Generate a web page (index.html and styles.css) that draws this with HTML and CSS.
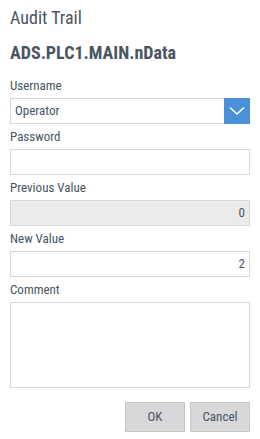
FILE: index.html
```html
<!DOCTYPE html>
<html>
<head>
<meta charset="utf-8">
<link rel="stylesheet" href="styles.css">
</head>
<body>
<div class="dialog">
  <div class="title">Audit Trail</div>
  <div class="symbol">ADS.PLC1.MAIN.nData</div>
  <div class="field">
    <div class="label">Username</div>
    <div class="combo">
      <div class="combo-text">Operator</div>
      <div class="combo-btn">
        <svg width="16" height="10" viewBox="0 0 16 10"><path d="M1 1.5 L8 8 L15 1.5" fill="none" stroke="#fff" stroke-width="1.6"/></svg>
      </div>
    </div>
  </div>
  <div class="field">
    <div class="label">Password</div>
    <div class="input"></div>
  </div>
  <div class="field">
    <div class="label">Previous Value</div>
    <div class="input disabled num">0</div>
  </div>
  <div class="field">
    <div class="label">New Value</div>
    <div class="input num">2</div>
  </div>
  <div class="field">
    <div class="label">Comment</div>
    <div class="textarea"></div>
  </div>
  <div class="buttons">
    <div class="btn">OK</div>
    <div class="btn">Cancel</div>
  </div>
</div>
</body>
</html>
```
FILE: styles.css
```css
html, body {
  margin: 0;
  padding: 0;
  background: #fff;
}
body {
  font-family: "Roboto Condensed", "Liberation Sans Narrow", "Roboto", sans-serif;
  color: #4a5562;
}
.dialog {
  width: 240px;
  padding: 7px 10px 0 10px;
  display: flex;
  flex-direction: column;
}
.title {
  font-size: 18px;
  line-height: 22px;
  height: 22px;
}
.symbol {
  font-size: 18px;
  font-weight: bold;
  line-height: 22px;
  height: 22px;
  margin-top: 13px;
  margin-bottom: 9px;
}
.field {
  display: flex;
  flex-direction: column;
  margin-top: 5px;
}
.label {
  font-size: 13px;
  line-height: 16px;
  height: 16px;
  margin-bottom: 4px;
}
.combo {
  display: flex;
  height: 26px;
}
.combo-text {
  flex: 1;
  border: 1px solid #d8d8d8;
  border-right: none;
  font-size: 13px;
  line-height: 24px;
  padding-left: 4px;
}
.combo-btn {
  width: 26px;
  background: #4a90d9;
  display: flex;
  align-items: center;
  justify-content: center;
}
.input {
  height: 24px;
  border: 1px solid #d8d8d8;
  font-size: 13px;
  line-height: 24px;
  padding: 0 4px;
}
.input.disabled {
  background: #ebebeb;
}
.num {
  text-align: right;
}
.textarea {
  height: 84px;
  border: 1px solid #d8d8d8;
}
.buttons {
  display: flex;
  justify-content: flex-end;
  gap: 5px;
  margin-top: 14px;
}
.btn {
  width: 58px;
  height: 28px;
  background: #d8d8da;
  border: 1px solid #c6c6c6;
  font-size: 13px;
  line-height: 28px;
  text-align: center;
}
```
